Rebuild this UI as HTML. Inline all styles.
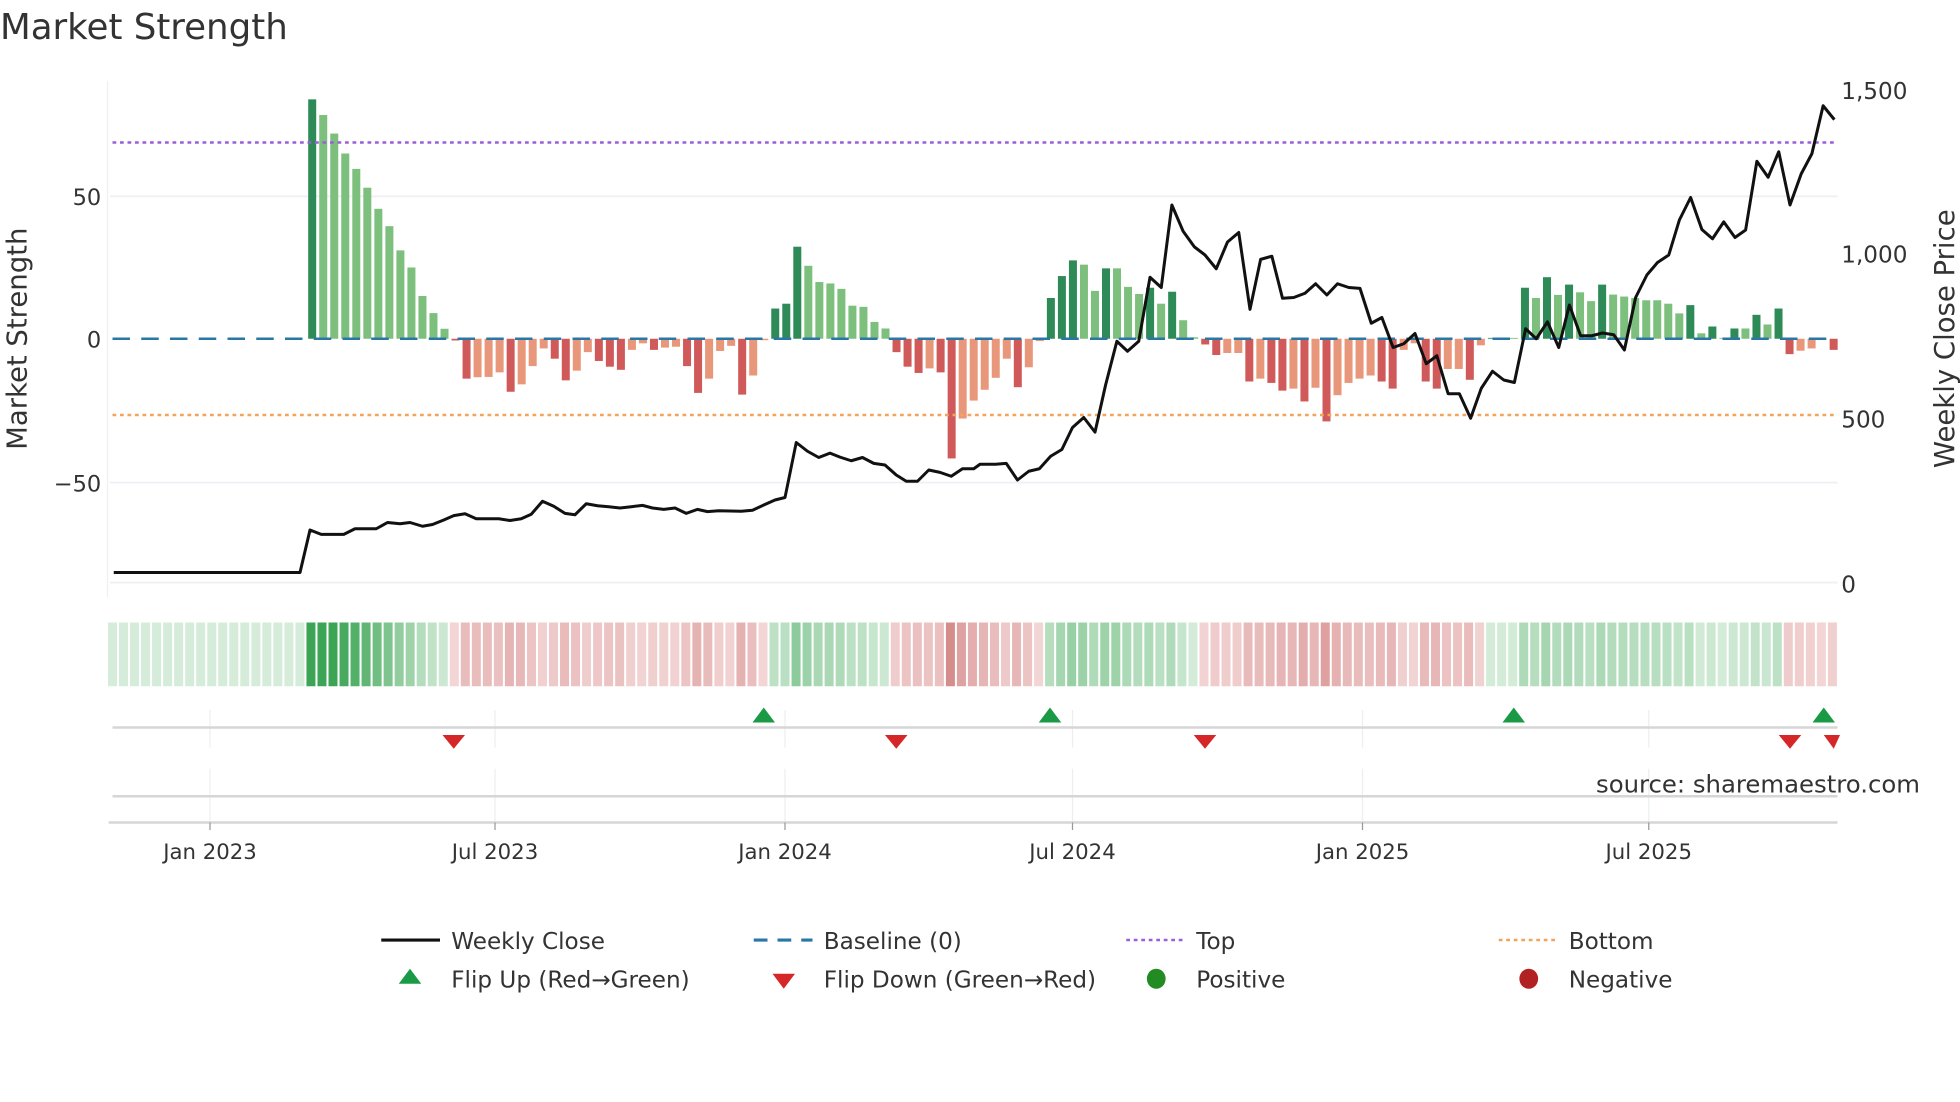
<!DOCTYPE html>
<html><head><meta charset="utf-8"><style>
html,body{margin:0;padding:0;background:#fff;width:1960px;height:1102px;overflow:hidden}
svg{display:block}
text{font-family:"DejaVu Sans","Liberation Sans",sans-serif;fill:#333}
</style></head><body>
<svg id="s" width="1960" height="1102" viewBox="0 0 1568 881.6" xmlns="http://www.w3.org/2000/svg">
<rect width="1568" height="882" fill="#fff"/>
<text x="0" y="31" font-size="28.5" fill="#333">Market Strength</text>
<line x1="86" y1="65" x2="86" y2="478" stroke="#eef0f4" stroke-width="1"/>
<g stroke="#eef0f4" stroke-width="1.5">
<line x1="88" y1="157" x2="1470" y2="157"/>
<line x1="88" y1="386" x2="1470" y2="386"/>
<line x1="88" y1="466" x2="1470" y2="466"/>
</g>
<g font-size="18" text-anchor="end">
<text x="81" y="164">50</text><text x="81" y="278">0</text><text x="81" y="393">−50</text>
</g>
<g font-size="18.5">
<text x="1473" y="79">1,500</text><text x="1473" y="210">1,000</text><text x="1473" y="342">500</text><text x="1473" y="474">0</text>
</g>
<text transform="translate(21,271) rotate(-90)" font-size="22" text-anchor="middle">Market Strength</text>
<text transform="translate(1563,271) rotate(-90)" font-size="22" text-anchor="middle">Weekly Close Price</text>
<g id="bars"></g>
<line x1="90" y1="114" x2="1470" y2="114" stroke="#9b5fd8" stroke-width="2" stroke-dasharray="3,3"/>
<line x1="90" y1="332" x2="1470" y2="332" stroke="#f2a35e" stroke-width="2" stroke-dasharray="3,3"/>
<line x1="90" y1="271" x2="1470" y2="271" stroke="#2a77a6" stroke-width="2" stroke-dasharray="14,9"/>
<polyline id="pl" fill="none" stroke="#111" stroke-width="2.4" stroke-linejoin="round"/>
<g id="strip"></g>
<g stroke="#eceff2" stroke-width="1">
<line x1="168" y1="568" x2="168" y2="598"/><line x1="396" y1="568" x2="396" y2="598"/><line x1="628" y1="568" x2="628" y2="598"/><line x1="858" y1="568" x2="858" y2="598"/><line x1="1090" y1="568" x2="1090" y2="598"/><line x1="1319" y1="568" x2="1319" y2="598"/>
<line x1="168" y1="615" x2="168" y2="658"/><line x1="396" y1="615" x2="396" y2="658"/><line x1="628" y1="615" x2="628" y2="658"/><line x1="858" y1="615" x2="858" y2="658"/><line x1="1090" y1="615" x2="1090" y2="658"/><line x1="1319" y1="615" x2="1319" y2="658"/>
</g>
<line x1="90" y1="582" x2="1470" y2="582" stroke="#d6d6d6" stroke-width="2"/>
<line x1="90" y1="637" x2="1470" y2="637" stroke="#d6d6d6" stroke-width="2"/>
<line x1="87" y1="658" x2="1470" y2="658" stroke="#d6d6d6" stroke-width="2"/>
<g stroke="#999" stroke-width="1">
<line x1="168" y1="658" x2="168" y2="664"/><line x1="396" y1="658" x2="396" y2="664"/><line x1="628" y1="658" x2="628" y2="664"/><line x1="858" y1="658" x2="858" y2="664"/><line x1="1090" y1="658" x2="1090" y2="664"/><line x1="1319" y1="658" x2="1319" y2="664"/>
</g>
<g fill="#1a9a45">
<polygon points="602,578 611,566 620,578"/><polygon points="831,578 840,566 849,578"/><polygon points="1202,578 1211,566 1220,578"/><polygon points="1450,578 1459,566 1468,578"/>
</g>
<g fill="#d62728">
<polygon points="354,588 363,599 372,588"/><polygon points="708,588 717,599 726,588"/><polygon points="955,588 964,599 973,588"/><polygon points="1423,588 1432,599 1441,588"/><polygon points="1459,588 1467,599 1472,588"/>
</g>
<text x="1536" y="634" font-size="19.5" fill="#8f8f8f" text-anchor="end">source: sharemaestro.com</text>
<g font-size="17" text-anchor="middle">
<text x="168" y="687">Jan 2023</text><text x="396" y="687">Jul 2023</text><text x="628" y="687">Jan 2024</text><text x="858" y="687">Jul 2024</text><text x="1090" y="687">Jan 2025</text><text x="1319" y="687">Jul 2025</text>
</g>
<g font-size="18.5">
<line x1="305" y1="752" x2="352" y2="752" stroke="#111" stroke-width="2.5"/>
<text x="361" y="759">Weekly Close</text>
<line x1="603" y1="752" x2="650" y2="752" stroke="#2a77a6" stroke-width="2.5" stroke-dasharray="11,8"/>
<text x="659" y="759">Baseline (0)</text>
<line x1="901" y1="752" x2="946" y2="752" stroke="#9b5fd8" stroke-width="2" stroke-dasharray="3,3"/>
<text x="957" y="759">Top</text>
<line x1="1199" y1="752" x2="1244" y2="752" stroke="#f2a35e" stroke-width="2" stroke-dasharray="3,3"/>
<text x="1255" y="759">Bottom</text>
<polygon points="319,787 328,775 337,787" fill="#1a9a45"/>
<text x="361" y="790">Flip Up (Red→Green)</text>
<polygon points="618,779 627,791 636,779" fill="#d62728"/>
<text x="659" y="790">Flip Down (Green→Red)</text>
<ellipse cx="925" cy="783" rx="7.5" ry="8" fill="#228b22"/>
<text x="957" y="790">Positive</text>
<ellipse cx="1223" cy="783" rx="7.5" ry="8" fill="#b22222"/>
<text x="1255" y="790">Negative</text>
</g>
</svg>
<script>
var v=new Array(157).fill(0);
var a=[84,78.5,72,65,59.6,53,45.6,39.5,31,25,15,9,3.5,-0.6];for(var i=0;i<a.length;i++)v[18+i]=a[i];
a=[-14,-13.5,-13.4,-11.8,-18.6,-16,-9.6,-3.4,-7,-14.6,-11.2,-4.7,-7.8,-9.8,-10.9,-3.9,-1.6,-3.9,-3.1,-2.8,-9.6,-19,-14,-4.3,-2.5,-19.6,-12.9,-0.5,10.6,12.3,32.3,25.6,19.9,19.4,17.5,11.6,11.2,5.9,3.6,-4.7,-9.8,-12,-10.4,-11.8,-42,-28,-21.7,-17.9,-13.7,-7,-17,-10,-0.8,14.3,22,27.5,26,16.8,24.7,24.7,18.2,15.7,17.9,12.3,16.5,6.5,0.5,-2,-5.7,-5,-5,-15,-14,-15.5,-18.2,-17.5,-22,-17.2,-29,-19.8,-15.5,-14,-12.9,-15,-17.5,-3.9,-1.6,-15,-17.5,-10.6,-10.6,-14.4,-2.3,0.3,0.3,0.3,17.9,14.3,21.6,15.4,19,16.3,13.2,19,15.5,14.8,14.3,13.5,13.5,12.3,8.9,11.8,1.9,4.3,0.3,3.6,3.6,8.4,5,10.6,-5.4,-4.2,-3.4,-0.3,-3.9];
for(i=0;i<a.length;i++)v[32+i]=a[i];
var NS="http://www.w3.org/2000/svg",g=document.getElementById('bars'),st=document.getElementById('strip');
function X(i){return 91+i*8.82;}
function mix(c1,c2,t){t=Math.max(0,Math.min(1,t));var r=[0,1,2].map(function(k){return Math.round(c1[k]+(c2[k]-c1[k])*t)});return 'rgb('+r.join(',')+')';}
for(i=0;i<157;i++){
 var val=v[i],prev=i>0?v[i-1]:0,x=X(i);
 if(i>=18&&Math.abs(val)>0.05){
  var r=document.createElementNS(NS,'rect');var h=Math.abs(val)*2.28;
  r.setAttribute('x',x-3.2);r.setAttribute('width',6.4);
  r.setAttribute('y',val>0?271-h:271);r.setAttribute('height',h);
  var inc=Math.abs(val)>Math.abs(prev)||(val*prev<=0);
  r.setAttribute('fill',val>0?(inc?'#2e8b57':'#7dbf7d'):(inc?'#d05a5a':'#e9977a'));
  g.appendChild(r);
 }
 var c=document.createElementNS(NS,'rect');
 c.setAttribute('x',x-4.6);c.setAttribute('width',7.2);c.setAttribute('y',498);c.setAttribute('height',51);
 var col;
 if(i<18)col='#d4ecd9';
 else if(val>=0)col=mix([212,236,217],[60,165,85],val/70);
 else col=mix([243,214,214],[215,140,140],-val/40);
 c.setAttribute('fill',col);st.appendChild(c);
}
var p=[[91,458],[240,458],[248,424],[257,427.5],[275,427.5],[284,423],[301,423],[310,418],[320,419],[328,418],[338,421],[346,419.6],[355,416],[363,412.5],[372,411],[381,415],[399,415],[408,416.4],[417,415],[425,411.4],[434,401],[443,405],[452,410.7],[460,411.8],[469,403],[478,404.6],[487,405.4],[496,406.4],[505,405.4],[514,404.3],[522,406.4],[531,407.5],[540,406.4],[549,410.7],[558,407.5],[566,409.3],[575,408.6],[593,409],[602,408.2],[611,404],[620,400],[628,398],[637,354],[646,361],[655,366],[664,362.5],[672,365.7],[681,368.6],[690,366],[699,370.7],[708,372],[717,380],[725,385],[734,385],[743,376],[752,377.9],[761,381],[770,375],[779,375],[784,371.4],[796.5,371.4],[805,370.7],[814,384],[823,377],[831.5,375],[840.5,365],[849.5,359.6],[858,342],[867,334],[876,345.7],[884.5,307.9],[893.5,273],[902,281],[911,273],[920,221.8],[929,230],[937.5,164],[946.5,185],[955.5,197.5],[964,204],[973,215],[982,193.6],[991,186],[1000,247.5],[1008.5,207.5],[1017.5,205],[1026,238.6],[1035,238],[1044,234.6],[1052.5,227],[1061.5,236],[1070,227],[1079,230],[1088,230.7],[1097,258.6],[1105.5,254],[1114.5,278],[1123,275],[1132,266.8],[1141,291],[1149.5,284.6],[1158.5,315],[1167.5,315],[1176.5,334.6],[1185,310.7],[1194,297],[1203,304],[1211.5,306],[1220.5,263],[1229,271],[1238,257.5],[1247,278],[1255.5,244],[1264.5,268.6],[1273.5,268.6],[1282,266.4],[1291,267.8],[1299.5,280],[1308.5,238],[1317.5,220],[1326,210],[1335,204],[1343.5,176],[1352.5,158],[1361.5,183.6],[1370,191],[1379,177.5],[1388,190],[1396.5,184],[1405.5,129],[1414.5,141.8],[1423,121.4],[1432,164],[1441,139],[1449.5,123],[1458.5,84.6],[1467.5,95.7]];
document.getElementById('pl').setAttribute('points',p.map(function(q){return q.join(',')}).join(' '));
</script>
</body></html>
